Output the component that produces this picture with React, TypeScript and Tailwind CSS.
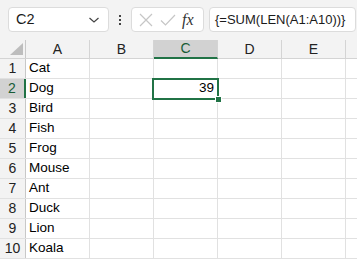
import React from "react";

const cols = ["A", "B", "C", "D", "E", "F"];
const animals = ["Cat", "Dog", "Bird", "Fish", "Frog", "Mouse", "Ant", "Duck", "Lion", "Koala"];

export default function App() {
  return (
    <div className="relative w-[357px] h-[260px] overflow-hidden bg-white" style={{ fontFamily: '"Liberation Sans", Arial, sans-serif' }}>
      {/* toolbar */}
      <div className="h-[40px] bg-[#f3f3f3] flex items-start pt-[7px] pl-[8px]">
        <div className="w-[101px] h-[25px] bg-white border border-[#dcdcdc] rounded-[4px] flex items-center pl-[7px] pr-[8px]">
          <span className="text-[14.5px] text-[#1b1b1b] flex-1">C2</span>
          <svg width="12" height="8" viewBox="0 0 12 8"><path d="M1.5 2 L6 6 L10.5 2" fill="none" stroke="#444" strokeWidth="1.2" /></svg>
        </div>
        <div className="w-[22px] h-[25px] flex flex-col items-center justify-center gap-[2px]">
          <div className="w-[2px] h-[2px] bg-[#444]" />
          <div className="w-[2px] h-[2px] bg-[#444]" />
          <div className="w-[2px] h-[2px] bg-[#444]" />
        </div>
        <div className="w-[73px] h-[25px] bg-white border border-[#dcdcdc] rounded-[4px] flex items-center pl-[5px]">
          <svg width="18" height="18" viewBox="0 0 18 18"><path d="M3 3 L15 15 M15 3 L3 15" stroke="#c6c6c6" strokeWidth="1.2" /></svg>
          <svg width="18" height="18" viewBox="0 0 18 18" className="ml-[4px]"><path d="M2 9.5 L6.5 14 L16 4" fill="none" stroke="#c6c6c6" strokeWidth="1.2" /></svg>
          <span className="ml-[5px] text-[16px] italic text-[#333]" style={{ fontFamily: '"Liberation Serif", "Times New Roman", serif' }}>fx</span>
        </div>
        <div className="ml-[5px] w-[147px] h-[25px] bg-white border border-[#dcdcdc] rounded-[4px] flex items-center pl-[5px]">
          <span className="text-[13px] text-[#1b1b1b] whitespace-nowrap">{"{=SUM(LEN(A1:A10))}"}</span>
        </div>
      </div>
      {/* header row */}
      <div className="flex h-[19px] bg-[#f3f3f3] border-b border-[#d4d4d4]">
        <div className="w-[26px] shrink-0 border-r border-[#c8c8c8] relative">
          <svg className="absolute left-[10px] top-[3px]" width="13" height="12" viewBox="0 0 13 12"><path d="M13 0 L13 12 L0 12 Z" fill="#bdbdbd" /></svg>
        </div>
        {cols.map((c) => (
          <div
            key={c}
            className={
              c === "C"
                ? "w-[64px] shrink-0 bg-[#d2d2d2] border-r border-[#d4d4d4] border-b-2 border-b-[#217346] -mb-[1px] flex items-center justify-center text-[14px] text-[#185c37]"
                : "w-[64px] shrink-0 border-r border-[#d4d4d4] flex items-center justify-center text-[14px] text-[#222]"
            }
          >
            {c === "F" ? null : c}
          </div>
        ))}
      </div>
      {/* rows */}
      {animals.map((a, i) => (
        <div key={a} className="flex h-[20px] border-b border-[#e1e1e1]">
          <div
            className={
              i === 1
                ? "w-[26px] shrink-0 bg-[#d2d2d2] border-r-2 border-[#217346] flex items-center justify-center text-[14px] text-[#185c37]"
                : "w-[26px] shrink-0 bg-[#f3f3f3] border-r border-[#c8c8c8] flex items-center justify-center text-[14px] text-[#222]"
            }
          >
            {i + 1}
          </div>
          {cols.map((c) => (
            <div key={c} className="w-[64px] shrink-0 border-r border-[#e1e1e1] flex items-center px-[3px] text-[13.5px] text-black">
              {c === "A" ? a : c === "C" && i === 1 ? <span className="ml-auto">39</span> : null}
            </div>
          ))}
        </div>
      ))}
      {/* selection */}
      <div className="absolute left-[152px] top-[78px] w-[67px] h-[22px] border-2 border-[#217346]" />
      <div className="absolute left-[215px] top-[96px] w-[7px] h-[7px] bg-[#217346] border border-white" />
    </div>
  );
}
